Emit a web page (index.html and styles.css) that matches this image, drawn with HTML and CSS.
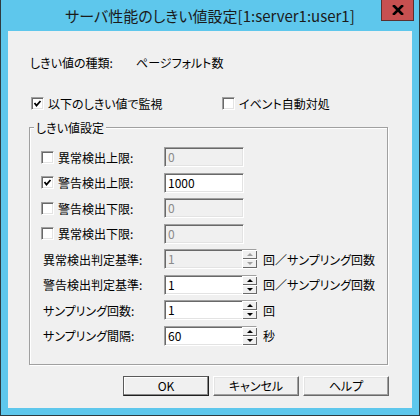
FILE: index.html
```html
<!DOCTYPE html>
<html lang="ja">
<head>
  <meta charset="UTF-8" />
  <title>サーバ性能のしきい値設定</title>
  <link rel="stylesheet" href="styles.css">
</head>
<body>
  <div class="window">
    <div class="titlebar">
      サーバ性能のしきい値設定[1:server1:user1]
      <div class="close">
        <svg width="12" height="10" viewBox="0 0 12 10">
          <path d="M2 1 L10 9 M10 1 L2 9" stroke="#000" stroke-width="2.6" stroke-linecap="square" />
        </svg>
      </div>
    </div>
    <div class="client">
      <div class="type-row">
        <span class="type-label">しきい値の種類:</span>
        <span>ページフォルト数</span>
      </div>

      <div class="check-row">
        <label class="check first">
          <span class="cb"><svg width="9" height="9" viewBox="0 0 9 9"><polyline points="1.5,4 3.5,6.5 7.5,2" fill="none" stroke="#000" stroke-width="1.8" /></svg></span>
          以下のしきい値で監視
        </label>
        <label class="check">
          <span class="cb"></span>
          イベント自動対処
        </label>
      </div>

      <div class="group">
        <span class="legend">しきい値設定</span>

        <div class="row">
          <label class="check name"><span class="cb"></span>異常検出上限:</label>
          <div class="field disabled"><span class="val">0</span></div>
        </div>
        <div class="row">
          <label class="check name"><span class="cb"><svg width="9" height="9" viewBox="0 0 9 9"><polyline points="1.5,4 3.5,6.5 7.5,2" fill="none" stroke="#000" stroke-width="1.8" /></svg></span>警告検出上限:</label>
          <div class="field"><span class="val">1000</span></div>
        </div>
        <div class="row">
          <label class="check name"><span class="cb"></span>警告検出下限:</label>
          <div class="field disabled"><span class="val">0</span></div>
        </div>
        <div class="row">
          <label class="check name"><span class="cb"></span>異常検出下限:</label>
          <div class="field disabled"><span class="val">0</span></div>
        </div>

        <div class="row">
          <span class="name plain">異常検出判定基準:</span>
          <div class="field spin disabled"><span class="val">1</span><span class="spinbtns"><span class="up"></span><span class="down"></span></span></div>
          <span class="unit">回／サンプリング回数</span>
        </div>
        <div class="row">
          <span class="name plain">警告検出判定基準:</span>
          <div class="field spin"><span class="val">1</span><span class="spinbtns"><span class="up"></span><span class="down"></span></span></div>
          <span class="unit">回／サンプリング回数</span>
        </div>
        <div class="row">
          <span class="name plain">サンプリング回数:</span>
          <div class="field spin"><span class="val">1</span><span class="spinbtns"><span class="up"></span><span class="down"></span></span></div>
          <span class="unit">回</span>
        </div>
        <div class="row">
          <span class="name plain">サンプリング間隔:</span>
          <div class="field spin"><span class="val">60</span><span class="spinbtns"><span class="up"></span><span class="down"></span></span></div>
          <span class="unit">秒</span>
        </div>
      </div>

      <div class="buttons">
        <button class="default">OK</button>
        <button>キャンセル</button>
        <button>ヘルプ</button>
      </div>
    </div>
  </div>
</body>
</html>
```

FILE: styles.css
```css
body { margin: 0; font-family: "Noto Sans CJK JP", "Noto Sans", sans-serif; font-size: 12px; color: #000; font-feature-settings: "palt"; }
.window { position: relative; width: 420px; height: 416px; box-sizing: border-box; background: #5ec7ec; border: 1px solid #2e3b40; border-top: none; padding: 0 7px 7px 7px; }
.titlebar { height: 31px; line-height: 31px; text-align: center; font-size: 15px; color: #1b1b1b; }
.close { position: absolute; top: 0; right: 5px; width: 31px; height: 20px; background: #c75050; border: 1px solid #5a3030; border-top: none; display: flex; align-items: center; justify-content: center; }
.client { height: 377px; background: #f0f0f0; overflow: hidden; }

.type-row { display: flex; margin-top: 24px; padding-left: 22px; height: 16px; line-height: 16px; }
.type-label { width: 106px; }

.check-row { display: flex; margin-top: 26px; padding-left: 23px; height: 13px; line-height: 13px; }
.check { display: flex; align-items: center; }
.check.first { width: 191px; }
.cb { width: 13px; height: 13px; box-sizing: border-box; margin-right: 4px; background: #fff; border: 1px solid; border-color: #a0a0a0 #fff #fff #a0a0a0; box-shadow: inset 1px 1px #696969, inset -1px -1px #e3e3e3; display: flex; align-items: center; justify-content: center; flex-shrink: 0; }

.group { position: relative; margin: 17px 0 0 21px; width: 359px; height: 238px; box-sizing: border-box; border: 1px solid #a0a0a0; box-shadow: inset 1px 1px #fff, 1px 1px #fff; padding: 19px 0 0 11px; display: flex; flex-direction: column; gap: 5.57px; }
.legend { position: absolute; top: -8px; left: 4px; padding: 0 2px; background: #f0f0f0; line-height: 15px; }

.row { display: flex; align-items: center; height: 20px; }
.name { width: 123px; flex-shrink: 0; }
.name.plain { box-sizing: border-box; padding-left: 2px; }

.field { position: relative; width: 80px; height: 20px; box-sizing: border-box; background: #fff; border: 1px solid; border-color: #a0a0a0 #fff #fff #a0a0a0; box-shadow: inset 1px 1px #696969, inset -1px -1px #e3e3e3; display: flex; align-items: center; line-height: 16px; }
.field.disabled { background: #f0f0f0; color: #8a8a8a; }
.val { padding-left: 3px; flex: 1; }
.field.spin { width: 93px; }
.spinbtns { display: flex; flex-direction: column; width: 15px; height: 18px; margin-right: -1px; }
.spinbtns span { position: relative; flex: 1; background: #f0f0f0; box-shadow: inset 1px 1px #fff, inset -1px -1px #696969; }
.spinbtns span::before { content: ""; position: absolute; left: 5px; border-left: 3px solid transparent; border-right: 3px solid transparent; }
.spinbtns .up::before { top: 3px; border-bottom: 3px solid #000; }
.spinbtns .down::before { top: 3px; border-top: 3px solid #000; }
.disabled .spinbtns .up::before { border-bottom-color: #a0a0a0; }
.disabled .spinbtns .down::before { border-top-color: #a0a0a0; }
.unit { margin-left: 6px; }

.buttons { display: flex; justify-content: flex-end; gap: 4px; margin-top: 11px; padding-right: 23px; }
button { width: 86px; height: 20px; padding: 0; font-family: inherit; font-size: 12px; color: #000; background: #f0f0f0; border: 1px solid; border-color: #fff #696969 #696969 #fff; box-shadow: inset -1px -1px #a0a0a0, inset 1px 1px #e3e3e3; line-height: 16px; font-feature-settings: "palt"; }
button.default { border-color: #5a5a5a #202020 #202020 #5a5a5a; box-shadow: inset -1px -1px #8a8a8a, inset 1px 1px #fff; }
```
